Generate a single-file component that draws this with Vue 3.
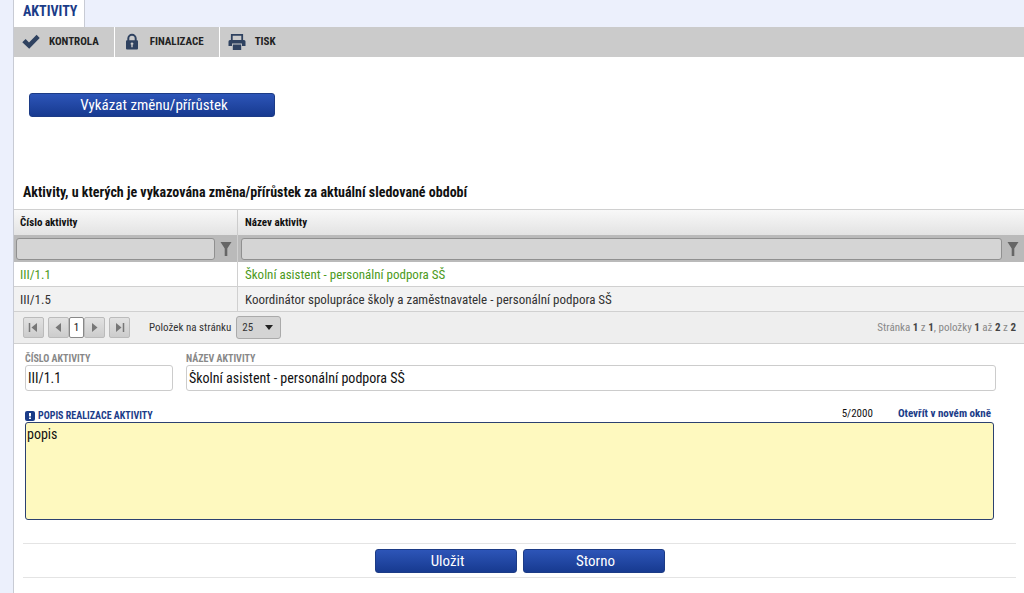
<script setup>
import { ref, computed } from 'vue'

const actions = [
  { id: 'check', label: 'KONTROLA' },
  { id: 'lock', label: 'FINALIZACE' },
  { id: 'print', label: 'TISK' }
]
const rows = [
  { code: 'III/1.1', name: 'Školní asistent - personální podpora SŠ' },
  { code: 'III/1.5', name: 'Koordinátor spolupráce školy a zaměstnavatele - personální podpora SŠ' }
]
const selected = ref(0)
const codeFilter = ref('')
const nameFilter = ref('')
const pageSize = ref('25')
const code = ref(rows[0].code)
const name = ref(rows[0].name)
const description = ref('popis')
const count = computed(() => description.value.length)

function select(i) {
  selected.value = i
  code.value = rows[i].code
  name.value = rows[i].name
}
</script>

<template>
  <div class="shell">
    <nav class="tabs"><a class="tab" href="#aktivity">AKTIVITY</a></nav>
    <main class="panel">
      <div class="toolbar">
        <button v-for="a in actions" :key="a.id" class="tool" type="button">
          <svg v-if="a.id === 'check'" width="18" height="18" viewBox="0 0 18 18"><path d="M0.3 9.300 3.600 6 7 9.400 14.600 1.800 17.700 4.900 7.200 15.800z" fill="#2f4260" /></svg>
          <svg v-else-if="a.id === 'lock'" width="18" height="18" viewBox="0 0 18 18"><path d="M5.3 8V5.5a3.7 3.7 0 0 1 7.4 0V8" fill="none" stroke="#2f4260" stroke-width="2" /><rect x="3" y="7.3" width="12" height="9.2" rx="1" fill="#2f4260" /><path d="M9 9.5v4.8M7.7 10.8h2.6" stroke="#cbcbcb" stroke-width="1.4" /></svg>
          <svg v-else width="18" height="18" viewBox="0 0 18 18"><path d="M3.8 7V1.8h10.4V7" fill="none" stroke="#2f4260" stroke-width="1.8" /><path d="M2 7h14a1.5 1.5 0 0 1 1.5 1.5V13H14v-2.6H4V13H.5V8.500A1.5 1.500 0 0 1 2 7z" fill="#2f4260" /><path d="M4.800 11.500h8.400V17H4.800z" fill="#2f4260" /></svg>
          <span>{{ a.label }}</span>
        </button>
      </div>

      <button class="primary report" type="button">Vykázat změnu/přírůstek</button>

      <h1>Aktivity, u kterých je vykazována změna/přírůstek za aktuální sledované období</h1>

      <table class="grid">
        <colgroup><col class="col-code"><col></colgroup>
        <thead>
          <tr><th scope="col">Číslo aktivity</th><th scope="col">Název aktivity</th></tr>
          <tr class="filters">
            <td>
              <div class="filter">
                <input v-model="codeFilter" type="text" aria-label="Filtr: Číslo aktivity">
                <button type="button" aria-label="Filtrovat číslo aktivity"><svg width="12" height="16" viewBox="0 0 12 16"><path d="M.5 1h11L7.300 7.500V15H4.700V7.500z" fill="#666" /></svg></button>
              </div>
            </td>
            <td>
              <div class="filter">
                <input v-model="nameFilter" type="text" aria-label="Filtr: Název aktivity">
                <button type="button" aria-label="Filtrovat název aktivity"><svg width="12" height="16" viewBox="0 0 12 16"><path d="M.5 1h11L7.300 7.500V15H4.700V7.500z" fill="#666" /></svg></button>
              </div>
            </td>
          </tr>
        </thead>
        <tbody>
          <tr v-for="(r, i) in rows" :key="r.code" :class="{ active: i === selected, alt: i % 2 }" @click="select(i)">
            <td>{{ r.code }}</td><td>{{ r.name }}</td>
          </tr>
        </tbody>
      </table>

      <div class="pager">
        <div class="pages">
          <button type="button" aria-label="První stránka"><svg width="11" height="11" viewBox="0 0 11 11"><path d="M1.500 1v9" stroke="#777" stroke-width="1.500" /><path d="M9 1v9L3.500 5.500z" fill="#777" /></svg></button>
          <button class="prev" type="button" aria-label="Předchozí stránka"><svg width="11" height="11" viewBox="0 0 11 11"><path d="M8 1v9L2.500 5.500z" fill="#777" /></svg></button>
          <button class="current" type="button">1</button>
          <button type="button" aria-label="Další stránka"><svg width="11" height="11" viewBox="0 0 11 11"><path d="M3 1v9l5.500-4.500z" fill="#777" /></svg></button>
          <button class="last" type="button" aria-label="Poslední stránka"><svg width="11" height="11" viewBox="0 0 11 11"><path d="M9.500 1v9" stroke="#777" stroke-width="1.500" /><path d="M2 1v9l5.500-4.500z" fill="#777" /></svg></button>
        </div>
        <label for="size">Položek na stránku</label>
        <div class="select">
          <select id="size" v-model="pageSize"><option>25</option><option>50</option><option>100</option></select>
          <svg width="8" height="5" viewBox="0 0 8 5"><path d="M0 0h8L4 5z" fill="#222" /></svg>
        </div>
        <p class="summary">Stránka <b>1</b> z <b>1</b>, položky <b>1</b> až <b>2</b> z <b>2</b></p>
      </div>

      <form class="detail" @submit.prevent>
        <div class="fields">
          <div class="field short">
            <label for="code">ČÍSLO AKTIVITY</label>
            <input id="code" v-model="code" type="text">
          </div>
          <div class="field">
            <label for="name">NÁZEV AKTIVITY</label>
            <input id="name" v-model="name" type="text">
          </div>
        </div>
        <div class="describe">
          <div class="describe-head">
            <label for="description">
              <svg width="10" height="10" viewBox="0 0 10 10"><rect width="10" height="10" rx="2" fill="#1b3c88" /><path d="M5 2v3.500M5 6.500v1.500" stroke="#fff" stroke-width="2" /></svg>
              POPIS REALIZACE AKTIVITY
            </label>
            <span class="count">{{ count }}/2000</span>
            <a href="#okno">Otevřít v novém okně</a>
          </div>
          <textarea id="description" v-model="description" maxlength="2000"></textarea>
        </div>
        <div class="buttons">
          <button class="primary" type="submit">Uložit</button>
          <button class="primary" type="button">Storno</button>
        </div>
      </form>
    </main>
  </div>
</template>

<style>
body {
  background: #ecf0fc;
}
</style>

<style scoped>
.shell,
.shell * {
  box-sizing: border-box;
}
.shell {
  display: flex;
  flex-direction: column;
  min-height: 100vh;
  padding-left: 13px;
  font-family: "Roboto Condensed", "Liberation Sans Narrow", Roboto, "Liberation Sans", sans-serif;
  font-size: 14px;
  line-height: 18px;
  color: #333;
}
button,
input,
select,
textarea {
  margin: 0;
  padding: 0;
  font: inherit;
  color: inherit;
}
button {
  cursor: pointer;
}
svg {
  display: block;
  flex: none;
}
.tabs {
  display: flex;
}
.tab {
  height: 27px;
  padding: 2px 7px 0 9px;
  border: 1px solid #c8cbd4;
  border-width: 0 1px;
  background: #fff;
  color: #1b3c88;
  font-weight: 700;
  text-decoration: none;
}
.panel {
  flex: 1;
  border-left: 1px solid #c8cbd4;
  background: #fff;
}
.toolbar {
  display: flex;
  height: 30px;
  background: #cbcbcb;
}
.tool {
  display: flex;
  align-items: center;
  gap: 9px;
  padding: 0 15px 0 8px;
  border: 0;
  border-right: 1px solid #fff;
  background: none;
  color: #222;
  font-size: 11px;
  font-weight: 700;
}
.tool:last-child {
  border: 0;
}
.primary {
  height: 24px;
  padding-left: 4px;
  border: 1px solid #1c3b86;
  border-radius: 3px;
  background: linear-gradient(#2d55b8, #173a90);
  color: #fff;
  font-size: 15px;
  line-height: 22px;
}
.report {
  display: block;
  width: 246px;
  margin: 36px 0 0 15px;
}
h1 {
  margin: 67px 0 8px 9px;
  color: #111;
  font-size: 14px;
  font-weight: 700;
  line-height: 17px;
}
.grid {
  width: 100%;
  table-layout: fixed;
  border-collapse: separate;
  border-spacing: 0;
  border-top: 1px solid #d0d0d0;
}
.col-code {
  width: 224px;
}
th {
  height: 25px;
  padding: 0 6px;
  border-right: 1px solid #ccc;
  background: linear-gradient(#f8f8f8, #e3e3e3);
  color: #111;
  font-size: 11px;
  font-weight: 700;
  text-align: left;
}
td {
  height: 25px;
  padding: 2px 6px 0;
  border-right: 1px solid #d0d0d0;
  border-bottom: 1px solid #d0d0d0;
  font-size: 13px;
}
th:last-child,
td:last-child {
  padding-left: 7px;
  border-right: 0;
}
.filters td,
.filters td:last-child {
  height: 27px;
  padding: 0 5px 0 2px;
  border-bottom: 0;
  background: #bababa;
}
.filters td:last-child {
  padding-left: 3px;
}
.filter {
  display: flex;
  align-items: center;
  gap: 5px;
}
.filter input {
  flex: 1;
  min-width: 0;
  height: 22px;
  padding: 0 4px;
  border: 1px solid #909090;
  border-radius: 3px;
  background: #d5d5d5;
}
.filter button {
  border: 0;
  background: none;
}
.alt td {
  background: #f2f2f2;
}
.active td {
  color: #4c9a1c;
}
.pager {
  display: flex;
  align-items: center;
  height: 32px;
  padding: 0 8px 0 9px;
  border-bottom: 1px solid #d0d0d0;
  background: #eee;
  font-size: 11px;
}
.pages {
  display: flex;
  margin-right: 19px;
}
.pages button {
  display: flex;
  align-items: center;
  justify-content: center;
  width: 21px;
  height: 21px;
  border: 1px solid #bbb;
  border-radius: 2px;
  background: linear-gradient(#e2e2e2, #ccc);
}
.pages .prev,
.pages .last {
  margin-left: 4px;
}
.pages .current {
  width: 15px;
  border-color: #888;
  background: #fff;
  color: #111;
}
.select {
  display: flex;
  align-items: center;
  width: 45px;
  height: 23px;
  margin-left: 5px;
  border: 1px solid #aaa;
  border-radius: 3px;
  background: #d4d4d4;
}
.select select {
  width: 100%;
  height: 21px;
  padding-left: 5px;
  appearance: none;
  border: 0;
  background: none;
}
.select svg {
  margin: 0 7px 0 -15px;
  pointer-events: none;
}
.summary {
  margin: 0 0 0 auto;
  color: #888;
}
.summary b {
  color: #444;
}
.detail {
  padding: 8px 8px 0 9px;
}
.fields {
  display: flex;
  gap: 13px;
  padding: 0 20px 0 2px;
}
.field {
  flex: 1;
}
.short {
  flex: 0 0 148px;
}
.field label {
  display: block;
  color: #888;
  font-size: 10px;
  font-weight: 700;
  line-height: 13px;
}
.field input {
  display: block;
  width: 100%;
  height: 26px;
  padding: 0 2px;
  border: 1px solid #ccc;
  border-radius: 3px;
  background: #fff;
  color: #111;
}
.describe {
  padding: 14px 22px 0 2px;
}
.describe-head {
  display: flex;
  align-items: center;
  height: 17px;
  padding-right: 3px;
  font-size: 11px;
}
.describe-head label {
  display: flex;
  align-items: center;
  gap: 3px;
  margin-top: 4px;
  color: #1b3c88;
  font-size: 10px;
  font-weight: 700;
}
.count {
  margin: 0 25px 0 auto;
  color: #111;
}
.describe-head a {
  color: #1b3c88;
  font-weight: 700;
  text-decoration: none;
}
textarea {
  display: block;
  width: 100%;
  height: 98px;
  padding: 2px 1px;
  border: 1px solid #2c4170;
  border-radius: 3px;
  outline: 0;
  background: #fef9bf;
  color: #111;
  resize: none;
}
.buttons {
  display: flex;
  justify-content: center;
  gap: 6px;
  margin-top: 23px;
  padding: 5px 0 4px;
  border: 1px solid #e4e4e4;
  border-width: 1px 0;
}
.buttons .primary {
  width: 142px;
}
</style>
